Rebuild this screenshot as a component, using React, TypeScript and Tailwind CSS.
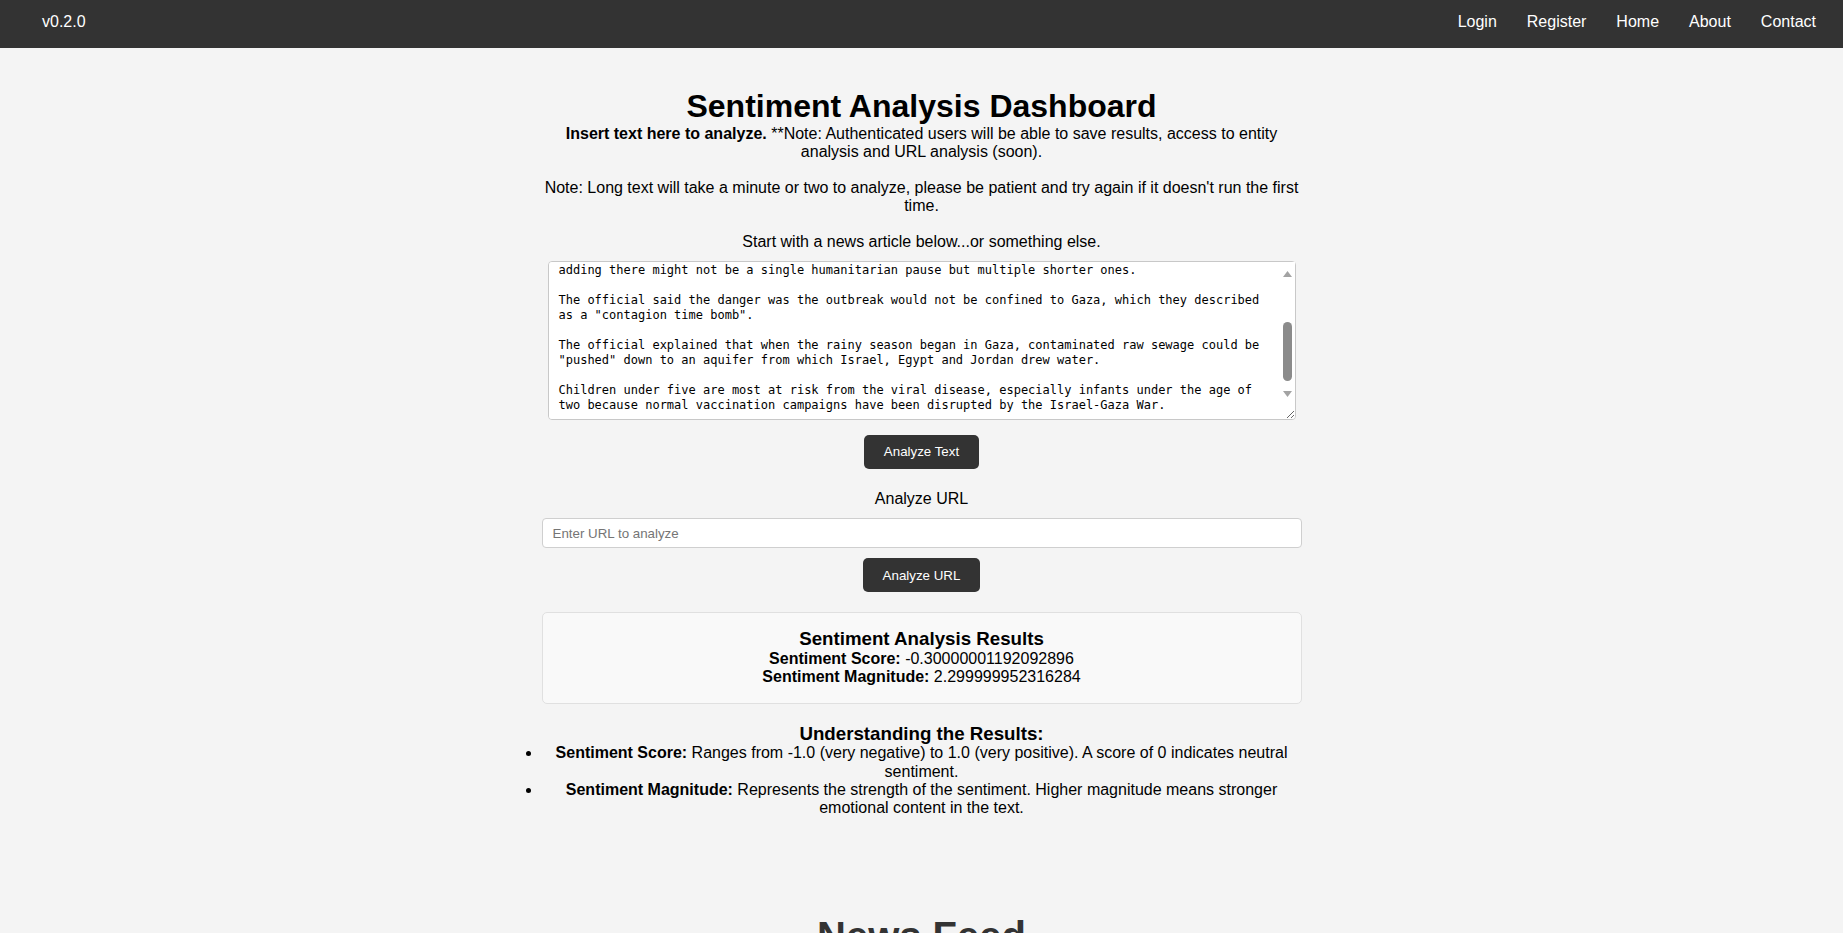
import { useEffect, useRef } from 'react';

const ARTICLE = `Polio in Gaza could spread beyond the Strip, UN official warns

A polio outbreak in Gaza could spread to neighbouring countries, a UN official has warned.

The official said a vaccination campaign would need pauses in the fighting to succeed.

He said the pauses would need to be long enough for health workers to reach every child in Gaza, adding there might not be a single humanitarian pause but multiple shorter ones.

The official said the danger was the outbreak would not be confined to Gaza, which they described as a "contagion time bomb".

The official explained that when the rainy season began in Gaza, contaminated raw sewage could be "pushed" down to an aquifer from which Israel, Egypt and Jordan drew water.

Children under five are most at risk from the viral disease, especially infants under the age of two because normal vaccination campaigns have been disrupted by the Israel-Gaza War.
`;

const navLinks = ['Login', 'Register', 'Home', 'About', 'Contact'];

function NavBar() {
  return (
    <nav className="h-[48px] bg-[#333] flex items-center justify-between pl-[42px] pr-[27px] pb-[4px] text-white text-[16px] leading-[18px]">
      <span>v0.2.0</span>
      <div className="flex items-center gap-[30px]">
        {navLinks.map((l) => (
          <a key={l} href="#" className="text-white">
            {l}
          </a>
        ))}
      </div>
    </nav>
  );
}

function Arrow({ down }: { down?: boolean }) {
  return (
    <svg width="9" height="6" viewBox="0 0 9 6">
      <path d={down ? 'M0 0 H9 L4.5 6z' : 'M4.5 0 L9 6 H0z'} fill="#a3a3a3" />
    </svg>
  );
}

// headless chrome hides native scrollbars, so the textarea's bar is drawn over it
function FakeScrollbar() {
  return (
    <div className="absolute top-[1px] right-[1px] w-[15px] h-[144px] bg-white flex flex-col items-center pointer-events-none">
      <div className="h-[24px] flex items-center justify-center">
        <Arrow />
      </div>
      <div className="mt-[36px] w-[9px] h-[59px] rounded-full bg-[#8b8b8b]" />
      <div className="h-[25px] flex items-center justify-center">
        <Arrow down />
      </div>
    </div>
  );
}

export default function App() {
  const areaRef = useRef<HTMLTextAreaElement>(null);

  useEffect(() => {
    if (areaRef.current) areaRef.current.scrollTop = 114;
  }, []);

  return (
    <div className="h-screen overflow-hidden bg-[#f4f4f4] text-black font-['Liberation_Sans',Arial,sans-serif] leading-[1.15]">
      <NavBar />

      <main className="w-[760px] mx-auto pt-[40px] flex flex-col items-center text-center">
        {/* ── Intro ── */}
        <h1 className="text-[32px] font-bold leading-[37px]">Sentiment Analysis Dashboard</h1>
        <p className="text-[16px] leading-[18px]">
          <strong>Insert text here to analyze.</strong> **Note: Authenticated users will be able to save results,
          access to entity analysis and URL analysis (soon).
          <br />
          <br />
          Note: Long text will take a minute or two to analyze, please be patient and try again if it doesn't run
          the first time.
          <br />
          <br />
          Start with a news article below...or something else.
        </p>

        {/* ── Text input ── */}
        <div className="relative mt-[10px] w-[748px] h-[159px]">
          <textarea
            ref={areaRef}
            defaultValue={ARTICLE}
            className="block w-full h-full bg-white border border-[#c8c8c8] rounded-[4px] pl-[10px] pr-[25px] py-[10px] text-left text-[12px] leading-[15px] text-black font-['DejaVu_Sans_Mono',monospace] overflow-y-auto outline-none"
          />
          <FakeScrollbar />
        </div>

        <button className="mt-[15px] h-[34px] px-[20px] bg-[#333] text-white text-[13.33px] rounded-[5px]">
          Analyze Text
        </button>

        {/* ── URL ── */}
        <h4 className="mt-[21px] text-[16px] leading-[18.4px]">Analyze URL</h4>
        <input
          type="text"
          placeholder="Enter URL to analyze"
          className="mt-[10px] w-full h-[30px] bg-white border border-[#cfcfcf] rounded-[4px] px-[10px] text-[13.33px] placeholder:text-[#757575] outline-none"
        />
        <button className="mt-[10px] h-[34px] px-[20px] bg-[#333] text-white text-[13.33px] rounded-[5px]">
          Analyze URL
        </button>

        {/* ── Results ── */}
        <div className="mt-[20px] w-full bg-[#f9f9f9] border border-[#e0e0e0] rounded-[5px] pt-[15px] pb-[16px]">
          <h3 className="text-[18.72px] font-bold leading-[21.5px]">Sentiment Analysis Results</h3>
          <p className="text-[16px] leading-[18.4px]">
            <strong>Sentiment Score:</strong> -0.30000001192092896
          </p>
          <p className="text-[16px] leading-[18.4px]">
            <strong>Sentiment Magnitude:</strong> 2.299999952316284
          </p>
        </div>

        <div className="mt-[19px] w-full">
          <h3 className="text-[18.72px] font-bold leading-[21.5px]">Understanding the Results:</h3>
          <ul className="list-disc pl-0 text-[16px] leading-[18.4px]">
            <li>
              <strong>Sentiment Score:</strong> Ranges from -1.0 (very negative) to 1.0 (very positive). A score of 0
              indicates neutral sentiment.
            </li>
            <li>
              <strong>Sentiment Magnitude:</strong> Represents the strength of the sentiment. Higher magnitude means
              stronger emotional content in the text.
            </li>
          </ul>
        </div>

        {/* ── News feed ── */}
        <h2 className="mt-[95px] text-[40px] font-bold leading-[46px] text-[#333]">News Feed</h2>
      </main>
    </div>
  );
}
